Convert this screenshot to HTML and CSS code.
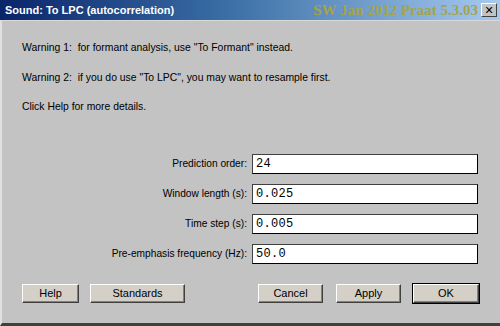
FILE: index.html
```html
<!DOCTYPE html>
<html lang="en">
<head>
  <meta charset="UTF-8" />
  <title>Sound: To LPC (autocorrelation)</title>
  <link rel="stylesheet" href="styles.css">
</head>
<body>
  <div class="window">
    <div class="titlebar">
      <span class="title">Sound: To LPC (autocorrelation)</span>
      <span class="stamp">SW Jan 2012 Praat 5.3.03</span>
      <button class="close">✕</button>
    </div>

    <div class="content">
      <p class="note">Warning 1:&nbsp; for formant analysis, use "To Formant" instead.</p>
      <p class="note">Warning 2:&nbsp; if you do use "To LPC", you may want to resample first.</p>
      <p class="note">Click Help for more details.</p>

      <div class="fields">
        <label class="label">Prediction order:</label>
        <div class="input">24</div>
        <label class="label">Window length (s):</label>
        <div class="input">0.025</div>
        <label class="label">Time step (s):</label>
        <div class="input">0.005</div>
        <label class="label">Pre-emphasis frequency (Hz):</label>
        <div class="input">50.0</div>
      </div>

      <div class="buttons">
        <button class="btn help">Help</button>
        <button class="btn standards">Standards</button>
        <span class="spacer"></span>
        <button class="btn cancel">Cancel</button>
        <button class="btn apply">Apply</button>
        <button class="btn ok">OK</button>
      </div>
    </div>
  </div>
</body>
</html>
```

FILE: styles.css
```css
:root {
  --face: #c3c3c3;
  --light: #ffffff;
  --shadow: #808080;
  --dark: #404040;
}

* { margin: 0; padding: 0; box-sizing: border-box; }

html, body {
  width: 500px;
  height: 326px;
  overflow: hidden;
  background: var(--face);
  font-family: 'Liberation Sans', Arial, sans-serif;
}

.window {
  width: 500px;
  height: 326px;
  display: flex;
  flex-direction: column;
  background: var(--face);
  border-left: 2px solid #e0e0e0;
  border-bottom: 3px solid #404040;
}

.titlebar {
  height: 21px;
  margin-left: -2px;
  display: flex;
  align-items: center;
  padding: 0 3px 0 5px;
  background: linear-gradient(to right, #0a246a 0%, #3a6ea5 45%, #a6caf0 100%);
  border-bottom: 1px solid #d8d8d8;
}

.title {
  color: #fff;
  font-family: 'Liberation Sans', Arial, sans-serif;
  font-weight: bold;
  font-size: 11px;
  flex: 1;
}

.stamp {
  color: #a4a448;
  font-family: 'Liberation Serif', serif;
  font-weight: bold;
  font-size: 15px;
  margin-right: 3px;
}

.close {
  width: 16px;
  height: 14px;
  background: var(--face);
  border: 1px solid;
  border-color: var(--light) var(--dark) var(--dark) var(--light);
  font-size: 11px;
  font-weight: bold;
  line-height: 11px;
  color: #000;
  font-family: 'DejaVu Sans', sans-serif;
}

.content {
  flex: 1;
  padding: 20px 0 0 20px;
  display: flex;
  flex-direction: column;
}

.note {
  font-size: 10.4px;
  color: #000;
  height: 14px;
  line-height: 14px;
  margin-bottom: 15.5px;
}

.fields {
  margin-top: 24px;
  display: grid;
  grid-template-columns: 225px 226px;
  column-gap: 5px;
  row-gap: 10px;
  align-items: center;
}

.label {
  text-align: right;
  font-size: 10.2px;
  color: #000;
}

.input {
  height: 20px;
  background: #fff;
  border: 1px solid #000;
  border-top-color: #404040;
  border-left-color: #404040;
  font-family: 'Liberation Mono', 'Courier New', monospace;
  font-size: 12px;
  line-height: 18px;
  padding-left: 3px;
  letter-spacing: 0.3px;
}

.buttons {
  margin-top: 20px;
  display: flex;
  align-items: center;
  padding-right: 21px;
}

.btn {
  height: 19px;
  background: #d4d0c8;
  border: 1px solid;
  border-color: var(--light) var(--dark) var(--dark) var(--light);
  box-shadow: inset -1px -1px 0 var(--shadow);
  font-family: 'Liberation Sans', Arial, sans-serif;
  font-size: 11px;
  color: #000;
}

.help { width: 57px; }
.standards { width: 95px; margin-left: 11px; }
.spacer { flex: 1; }
.cancel { width: 65px; }
.apply { width: 65px; margin-left: 13px; }
.ok {
  width: 66px;
  margin-left: 12px;
  outline: 1px solid #000;
}
```
